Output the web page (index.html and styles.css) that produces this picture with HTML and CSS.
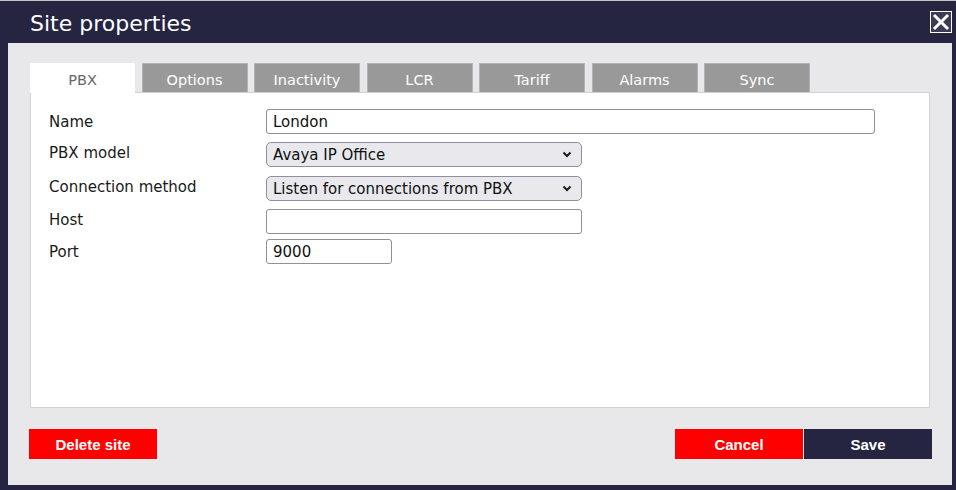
FILE: index.html
```html
<!DOCTYPE html>
<html>
<head>
<meta charset="utf-8">
<title>Site properties</title>
<link rel="stylesheet" href="styles.css">
</head>
<body>
<div class="dialog">
  <div class="header">
    <h1 class="title">Site properties</h1>
    <button class="close" aria-label="Close">
      <svg width="22" height="22" viewBox="0 0 22 22">
        <rect x="0.5" y="0.5" width="21" height="21" fill="#3b3b58" stroke="#ffffff" stroke-width="1"/>
        <path d="M5 5 L17 17 M17 5 L5 17" stroke="#ffffff" stroke-width="3" stroke-linecap="square"/>
      </svg>
    </button>
  </div>
  <div class="content">
    <div class="tabs">
      <div class="tab active">PBX</div>
      <div class="tab">Options</div>
      <div class="tab">Inactivity</div>
      <div class="tab">LCR</div>
      <div class="tab">Tariff</div>
      <div class="tab">Alarms</div>
      <div class="tab">Sync</div>
    </div>
    <div class="panel">
      <div class="row r1">
        <label class="label">Name</label>
        <input class="field wide" type="text" value="London">
      </div>
      <div class="row r2">
        <label class="label">PBX model</label>
        <div class="select-wrap">
          <select class="select"><option>Avaya IP Office</option></select>
          <svg class="chev" width="10" height="7" viewBox="0 0 10 7"><path d="M1.5 1.5 L5 5 L8.5 1.5" fill="none" stroke="#1b1b1b" stroke-width="2"/></svg>
        </div>
      </div>
      <div class="row r3">
        <label class="label">Connection method</label>
        <div class="select-wrap">
          <select class="select"><option>Listen for connections from PBX</option></select>
          <svg class="chev" width="10" height="7" viewBox="0 0 10 7"><path d="M1.5 1.5 L5 5 L8.5 1.5" fill="none" stroke="#1b1b1b" stroke-width="2"/></svg>
        </div>
      </div>
      <div class="row r4">
        <label class="label">Host</label>
        <input class="field medium" type="text" value="">
      </div>
      <div class="row r5">
        <label class="label">Port</label>
        <input class="field small" type="text" value="9000">
      </div>
    </div>
    <div class="footer">
      <button class="btn red">Delete site</button>
      <div class="right-btns">
        <button class="btn red">Cancel</button>
        <button class="btn navy">Save</button>
      </div>
    </div>
  </div>
</div>
</body>
</html>
```
FILE: styles.css
```css
html, body {
  margin: 0;
  padding: 0;
  background: #252542;
}
.dialog {
  width: 956px;
  height: 490px;
  box-sizing: border-box;
  background: #252542;
  border-top: 1px solid #c4c4c4;
  display: flex;
  flex-direction: column;
  font-family: "DejaVu Sans", Verdana, sans-serif;
}
.header {
  height: 42px;
  display: flex;
  align-items: flex-start;
  justify-content: space-between;
  padding: 0 4px 0 30px;
  box-sizing: border-box;
}
.title {
  margin: 0;
  padding-top: 10px;
  font-size: 22px;
  font-weight: normal;
  line-height: 26px;
  color: #ffffff;
}
.close {
  margin-top: 10px;
  width: 22px;
  height: 22px;
  padding: 0;
  border: 0;
  background: none;
  display: block;
}
.close svg { display: block; }
.content {
  margin: 0 4px 5px 8px;
  flex: 1;
  background: #e8e8ea;
  padding: 20px 22px 0 22px;
  display: flex;
  flex-direction: column;
}
.tabs {
  display: flex;
  gap: 6.5px;
  height: 29px;
  position: relative;
  z-index: 1;
}
.tab {
  width: 106px;
  height: 29px;
  box-sizing: border-box;
  background: #999999;
  border: 1px solid #b4b4b4;
  border-bottom: 0;
  color: #ffffff;
  font-size: 14.5px;
  text-align: center;
  padding-top: 5px;
  line-height: 23px;
}
.tab.active {
  width: 105px;
  background: #ffffff;
  border-color: #ffffff;
  color: #666666;
  height: 30px;
}
.panel {
  height: 316px;
  box-sizing: border-box;
  background: #ffffff;
  border: 1px solid #d2d2d2;
  padding: 16px 18px 0 18px;
  display: flex;
  flex-direction: column;
}
.row {
  display: flex;
  align-items: center;
  height: 25px;
}
.r2 { margin-top: 8px; }
.r3 { margin-top: 9px; }
.r4 { margin-top: 8px; }
.r5 { margin-top: 5px; }
.label {
  width: 217px;
  font-size: 15px;
  color: #1a1a1a;
}
.r2 .label, .r3 .label, .r4 .label { position: relative; top: -2px; }
.field {
  height: 25px;
  box-sizing: border-box;
  border: 1px solid #8f8f9d;
  border-radius: 3px;
  background: #ffffff;
  font-family: "DejaVu Sans", Verdana, sans-serif;
  font-size: 15px;
  color: #111111;
  padding: 0 6px;
  margin: 0;
}
.wide { width: 609px; }
.medium { width: 316px; }
.small { width: 126px; }
.select-wrap {
  position: relative;
  width: 316px;
  height: 25px;
}
.select {
  appearance: none;
  -webkit-appearance: none;
  width: 316px;
  height: 25px;
  box-sizing: border-box;
  border: 1px solid #8f8f9d;
  border-radius: 5px;
  background: #e9e9ed;
  font-family: "DejaVu Sans", Verdana, sans-serif;
  font-size: 15px;
  color: #111111;
  padding: 0 6px;
  margin: 0;
}
.chev {
  position: absolute;
  right: 10px;
  top: 9px;
  pointer-events: none;
}
.footer {
  display: flex;
  justify-content: space-between;
  margin: 21px -2px 0 -1px;
}
.right-btns {
  display: flex;
  gap: 1px;
}
.btn {
  width: 128px;
  height: 30px;
  border: 0;
  margin: 0;
  padding: 0;
  font-family: "Liberation Sans", Arial, sans-serif;
  font-weight: bold;
  font-size: 15px;
  color: #ffffff;
}
.red { background: #ff0000; }
.navy { background: #252542; }
```
